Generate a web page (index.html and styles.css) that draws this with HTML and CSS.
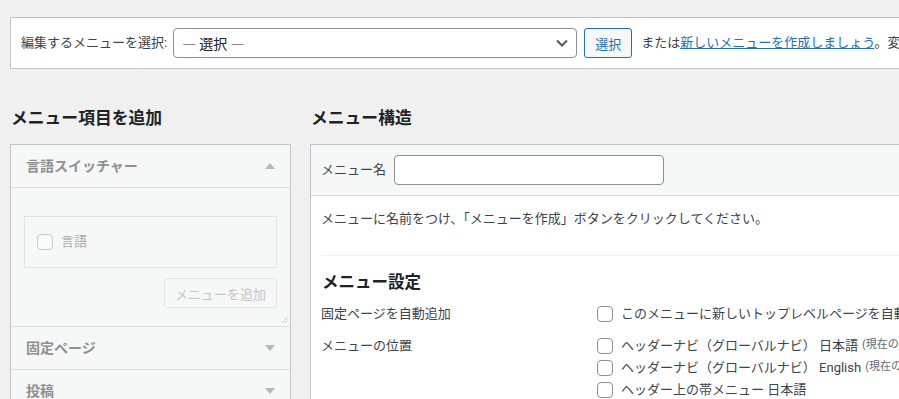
FILE: index.html
```html
<!DOCTYPE html>
<html lang="ja">
<head>
  <meta charset="utf-8" />
  <title>メニュー</title>
  <meta name="viewport" content="width=device-width, initial-scale=1">
  <link rel="stylesheet" href="styles.css">
</head>
<body>
  <div id="wrap">
    <div class="manage-menus">
      <label class="select-label" for="menu">編集するメニューを選択:</label>
      <div class="select-wrap">
        <select id="menu"><option>— 選択 —</option></select>
        <svg class="chevron" width="12" height="8" viewBox="0 0 12 8"><path d="M1 1.5l5 5 5-5" fill="none" stroke="#50575e" stroke-width="2"/></svg>
      </div>
      <button class="button">選択</button>
      <span class="hint">または<a href="#">新しいメニューを作成しましょう</a>。変更を保存するのを忘れないでください。</span>
    </div>

    <div id="columns">
      <div class="col-left">
        <h2>メニュー項目を追加</h2>
        <div class="accordion">
          <div class="section open">
            <h3 class="section-title">言語スイッチャー <span class="arrow up"></span></h3>
            <div class="section-content">
              <div class="inner-box">
                <label class="item"><span class="check"></span>言語</label>
              </div>
              <div class="add-row"><button class="button disabled">メニューを追加</button></div>
              <svg class="grip" width="8" height="8" viewBox="0 0 8 8"><path d="M1 7L7 1M4 7L7 4" stroke="#a7aaad" stroke-width="1" stroke-dasharray="1 1"/></svg>
            </div>
          </div>
          <div class="section">
            <h3 class="section-title">固定ページ <span class="arrow"></span></h3>
          </div>
          <div class="section">
            <h3 class="section-title">投稿 <span class="arrow"></span></h3>
          </div>
        </div>
      </div>

      <div class="col-right">
        <h2>メニュー構造</h2>
        <div class="menu-edit">
          <div class="menu-header">
            <label for="menu-name">メニュー名</label>
            <input id="menu-name" type="text">
          </div>
          <div class="menu-body">
            <p class="intro">メニューに名前をつけ、「メニューを作成」ボタンをクリックしてください。</p>
            <div class="menu-settings">
              <h3>メニュー設定</h3>
              <div class="setting">
                <div class="setting-label">固定ページを自動追加</div>
                <div class="setting-options">
                  <label class="option"><span class="check"></span>このメニューに新しいトップレベルページを自動的に追加</label>
                </div>
              </div>
              <div class="setting">
                <div class="setting-label">メニューの位置</div>
                <div class="setting-options">
                  <label class="option"><span class="check"></span>ヘッダーナビ（グローバルナビ） 日本語 <small>(現在の設定: グローバルナビ)</small></label>
                  <label class="option"><span class="check"></span>ヘッダーナビ（グローバルナビ） English <small>(現在の設定: Global Navi)</small></label>
                  <label class="option"><span class="check"></span>ヘッダー上の帯メニュー 日本語</label>
                </div>
              </div>
            </div>
          </div>
        </div>
      </div>
    </div>
  </div>
</body>
</html>
```

FILE: styles.css
```css
body {
  margin: 0;
  background: #f0f0f1;
  color: #3c434a;
  font-family: Roboto, "Noto Sans CJK JP", sans-serif;
  font-size: 13px;
  line-height: 1.5;
  overflow: hidden;
  white-space: nowrap;
}

#wrap {
  padding-left: 10px;
  width: 1200px;
}

.manage-menus {
  margin-top: 17px;
  background: #fff;
  border: 1px solid #c3c4c7;
  padding: 10px;
  display: flex;
  align-items: center;
  height: 30px;
}

.select-label {
  margin-right: 6px;
}

.select-wrap {
  position: relative;
}

.select-wrap select {
  appearance: none;
  width: 404px;
  height: 30px;
  border: 1px solid #8c8f94;
  border-radius: 4px;
  background: #fff;
  color: #1d2327;
  font-family: "Noto Sans CJK JP", sans-serif;
  font-size: 14px;
  padding: 0 24px 0 8px;
}

.chevron {
  position: absolute;
  right: 9px;
  top: 11px;
}

.button {
  height: 30px;
  margin-left: 7px;
  padding: 0 10px;
  border: 1px solid #2271b1;
  border-radius: 3px;
  background: #f6f7f7;
  color: #2271b1;
  font-family: inherit;
  font-size: 13px;
}

.hint {
  margin-left: 9px;
}

.hint a {
  color: #2271b1;
  text-decoration: underline;
}

#columns {
  display: flex;
  gap: 19px;
  margin-top: 37px;
}

h2 {
  margin: 0 0 14px 1px;
  font-size: 16.8px;
  line-height: 24px;
  font-weight: 700;
  color: #1d2327;
}

.col-left {
  width: 281px;
  flex: none;
}

.col-right {
  width: 900px;
}

.accordion {
  border: 1px solid #c3c4c7;
  background: #fff;
}

.section + .section {
  border-top: 1px solid #dcdcde;
}

.section-title {
  margin: 0;
  height: 42px;
  line-height: 42px;
  padding: 0 15px;
  font-size: 14px;
  font-weight: 700;
  color: #8c8f94;
  background: #f6f7f7;
  display: flex;
  justify-content: space-between;
  align-items: center;
}

.section.open .section-title {
  border-bottom: 1px solid #dcdcde;
}

.arrow {
  width: 0;
  height: 0;
  border-left: 5px solid transparent;
  border-right: 5px solid transparent;
  border-top: 6px solid #b4b7ba;
}

.arrow.up {
  border-top: none;
  border-bottom: 6px solid #b4b7ba;
}

.section-content {
  position: relative;
  background: #f6f7f7;
  padding: 28px 13px 18px;
}

.inner-box {
  height: 50px;
  border: 1px solid #e2e3e4;
  padding: 0 12px;
  display: flex;
  align-items: center;
}

.item {
  display: flex;
  align-items: center;
  color: #a7aaad;
}

.check {
  display: inline-block;
  box-sizing: border-box;
  width: 16px;
  height: 16px;
  border: 1px solid #8c8f94;
  border-radius: 4px;
  background: #fff;
  margin-right: 8px;
  flex: none;
}

.item .check {
  border-color: #c6c8cb;
  background: #fafafa;
}

.add-row {
  display: flex;
  justify-content: flex-end;
  margin-top: 10px;
}

.button.disabled {
  width: 113px;
  margin: 0;
  border-color: #e2e3e4;
  color: #c3c4c7;
  background: #f6f7f7;
}

.grip {
  position: absolute;
  right: 1px;
  bottom: 2px;
}

.menu-edit {
  border: 1px solid #c3c4c7;
  background: #fff;
}

.menu-header {
  background: #f6f7f7;
  border-bottom: 1px solid #dcdcde;
  padding: 10px;
  display: flex;
  align-items: center;
}

.menu-header label {
  margin-right: 8px;
}

.menu-header input {
  box-sizing: border-box;
  width: 270px;
  height: 30px;
  border: 1px solid #8c8f94;
  border-radius: 4px;
  background: #fff;
}

.menu-body {
  padding: 0 10px;
}

.intro {
  margin: 13px 0 26px;
}

.menu-settings {
  border-top: 1px solid #f0f0f1;
}

.menu-settings h3 {
  margin: 15px 0 8px 1px;
  font-size: 16.5px;
  line-height: 24px;
  font-weight: 700;
  color: #1d2327;
}

.setting {
  display: flex;
  margin-bottom: 10px;
}

.setting-label {
  width: 276px;
  line-height: 22px;
  flex: none;
}

.option {
  display: flex;
  align-items: center;
  height: 22px;
}

.option small {
  font-size: 11px;
  color: #646970;
  margin-left: 4px;
}
```
